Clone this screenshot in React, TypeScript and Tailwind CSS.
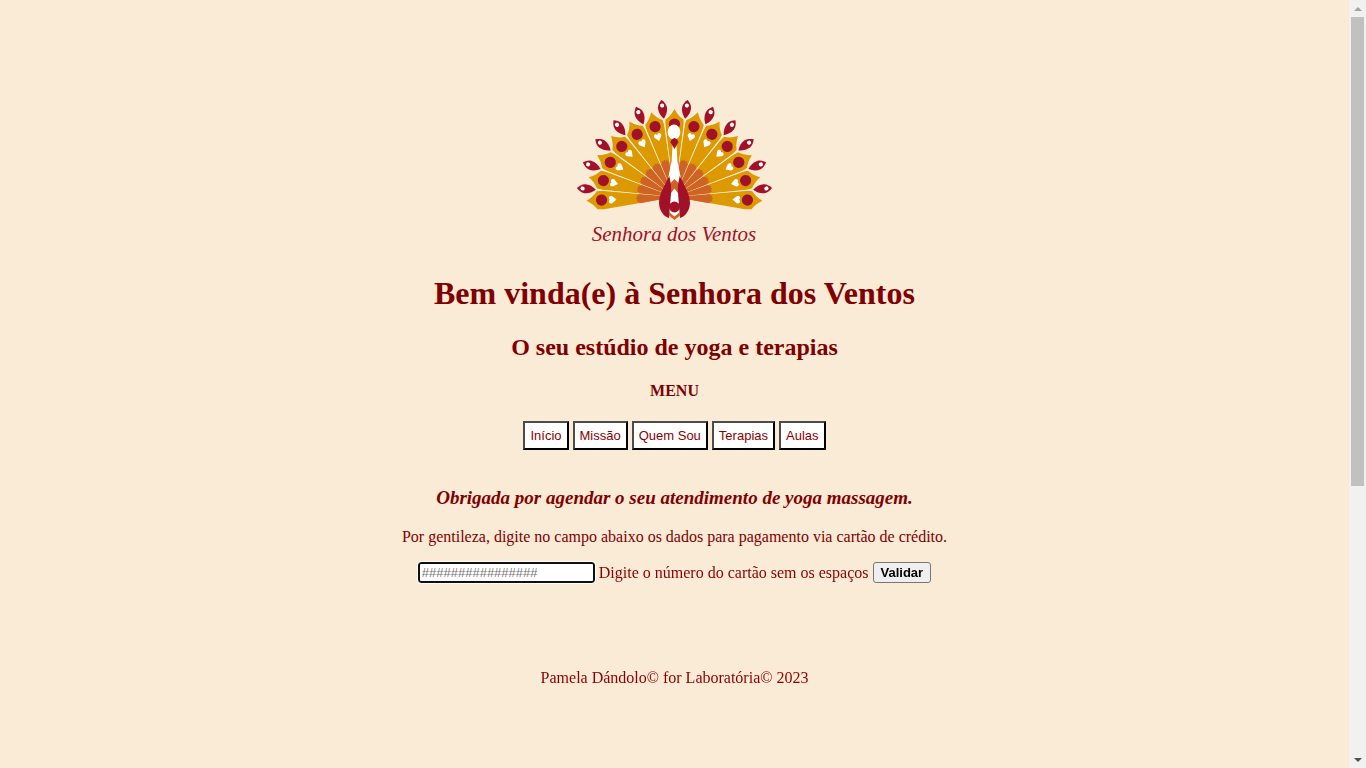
import React from "react";

const CX = 98.5;
const CY = 97;
const STEP = 15.4;
const feathers = [-6, -5, -4, -3, -2, -1, 1, 2, 3, 4, 5, 6, 0];
const drops = [-5.5, -4.5, -3.5, -2.5, -1.5, -0.5, 0.5, 1.5, 2.5, 3.5, 4.5, 5.5];
const menu = ["Início", "Missão", "Quem Sou", "Terapias", "Aulas"];

function Logo() {
  return (
    <svg
      viewBox="0 0 196 146"
      className="h-[146px] w-[196px]"
      role="img"
      aria-label="Senhora dos Ventos"
    >
      {feathers.map((k) => (
        <g key={k} transform={`translate(${CX} ${CY}) rotate(${k * STEP})`}>
          <path d="M0 0L-9.4 -71L-9 -77.5C-6 -79.5 -2.5 -83 0 -88C2.5 -83 6 -79.5 9 -77.5L9.4 -71Z" fill="#dc9900" />
          <path d="M0 0L-4.8 -35L-3.6 -35.5L-2.6 -38L-1.2 -37L0 -39L1.2 -37L2.6 -38L3.6 -35.5L4.8 -35Z" fill="#ce6324" />
          <circle cx="0" cy="-73" r="5.6" fill="#a11128" />
          <path d="M0 -58L-3.6 -62.5C-4.4 -65.7 -1.5 -66.6 0 -64.6C1.5 -66.6 4.4 -65.7 3.6 -62.5Z" fill="#fff" />
        </g>
      ))}
      {drops.map((k) => (
        <g key={k} transform={`translate(${CX} ${CY}) rotate(${k * STEP})`}>
          <path d="M0 0L-0.7 -77H0.7Z" fill="#faebd7" />
          <path d="M0 -79C-3 -82.5 -4.6 -86 -4.5 -90C-4.3 -93.5 -2 -96 0 -98C2 -96 4.3 -93.5 4.5 -90C4.6 -86 3 -82.5 0 -79Z" fill="#a11128" />
          <circle cx="0" cy="-92.3" r="2.1" fill="#fff" />
        </g>
      ))}
      <ellipse cx="98" cy="32" rx="6.3" ry="7.6" fill="#fff" />
      <path d="M96.6 45L95.6 61L92.2 78L98.5 82L104.8 78L101.4 61L100.4 45Z" fill="#fff" />
      <path d="M98.5 38Q102.2 39.5 102.3 42.3L98.5 49L94.5 42.3Q94.7 39.5 98.5 38Z" fill="#a11128" />
      <path d="M93 80L90 106L98.5 120L107 106L104 80L98.5 76Z" fill="#fff" />
      <path d="M98.5 79L103.5 84V95L98.5 88.5L93.5 95V84Z" fill="#ce6324" />
      <path d="M93.3 76C94.5 82 95.3 85 95.2 91L94.2 103L93 118C88 117 83 110 83 103C83 94 89.5 84 93.3 76Z" fill="#a11128" />
      <path d="M103.7 76C102.5 82 101.7 85 101.8 91L102.8 103L104 118C109 117 114 110 114 103C114 94 107.5 84 103.7 76Z" fill="#a11128" />
      <circle cx="98.5" cy="107" r="5.4" fill="#a11128" />
      <path d="M93 112L98.5 116.5L104 112V115.5L98.5 120L93 115.5Z" fill="#ce6324" />
      <text
        x="98"
        y="141"
        textAnchor="middle"
        fill="#a11128"
        fontSize="21"
        className="font-['Liberation_Serif',cursive] italic"
      >
        Senhora dos Ventos
      </text>
    </svg>
  );
}

function ScrollRail() {
  return (
    <div aria-hidden="true" className="sticky top-0 flex h-screen w-[17px] shrink-0 flex-col items-center bg-[#f1f1f1]">
      <div className="flex h-[17px] items-center">
        <svg viewBox="0 0 8 4" className="h-1 w-2"><path d="M4 0L8 4H0Z" fill="#a3a3a3" /></svg>
      </div>
      <div className="w-[13px] grow-[469] basis-0 bg-[#c1c1c1]" />
      <div className="grow-[265] basis-0" />
      <div className="flex h-[17px] items-center">
        <svg viewBox="0 0 8 4" className="h-1 w-2"><path d="M0 0H8L4 4Z" fill="#505050" /></svg>
      </div>
    </div>
  );
}

export default function App() {
  return (
    <div className="flex min-h-screen bg-[#faebd7] font-['Liberation_Serif',serif] text-base leading-[18px] text-[#800000]">
      <div className="flex min-w-0 flex-1 flex-col items-center px-2 pt-[100px] text-center">
        <header className="flex flex-col items-center">
          <Logo />
          <h1 className="mt-[29px] text-[32px] leading-[37px] font-bold">Bem vinda(e) à Senhora dos Ventos</h1>
          <h2 className="mt-[22px] text-2xl leading-[27px] font-bold">O seu estúdio de yoga e terapias</h2>
          <h3 className="mt-[21px] text-base leading-[18px] font-bold">MENU</h3>
          <nav className="mt-[21px] flex flex-wrap justify-center gap-1">
            {menu.map((label) => (
              <button
                key={label}
                type="button"
                className="border-2 border-t-[#4c4c4c] border-r-black border-b-black border-l-[#4c4c4c] bg-white p-[5px] font-['Liberation_Sans',sans-serif] text-[13px] leading-[15px] text-[#8b0000]"
              >
                {label}
              </button>
            ))}
          </nav>
        </header>
        <main className="mt-[37px] flex flex-col items-center">
          <h4 className="text-[19px] leading-[22px] font-bold italic">Obrigada por agendar o seu atendimento de yoga massagem.</h4>
          <p className="mt-[19px]">Por gentileza, digite no campo abaixo os dados para pagamento via cartão de crédito.</p>
          <form className="mt-4 flex flex-wrap items-center justify-center gap-1 text-[#8b0000]" onSubmit={(e) => e.preventDefault()}>
            <input
              id="card"
              type="text"
              inputMode="numeric"
              autoFocus
              placeholder="################"
              className="h-[21px] w-[177px] rounded-[3px] border-2 border-[#101010] bg-white px-[2px] font-['Liberation_Sans',sans-serif] text-[13px] leading-[15px] text-black outline outline-1 outline-white placeholder:text-[#757575]"
            />
            <label htmlFor="card">Digite o número do cartão sem os espaços</label>
            <button
              type="submit"
              className="h-[21px] rounded-[3px] border border-[#767676] bg-[#efefef] px-[7px] font-['Liberation_Sans',sans-serif] text-[13px] leading-[15px] font-bold text-black"
            >
              Validar
            </button>
          </form>
        </main>
        <footer className="mt-[86px] pb-20 text-[#8b0000]">Pamela Dándolo© for Laboratória© 2023</footer>
      </div>
      <ScrollRail />
    </div>
  );
}
